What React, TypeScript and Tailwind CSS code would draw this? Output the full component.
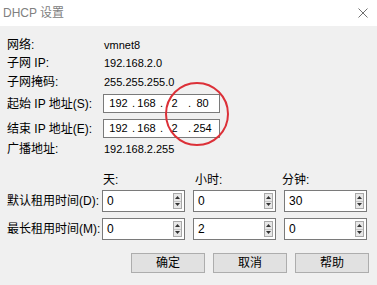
import React from "react";

const font = { fontFamily: '"Liberation Sans", "Noto Sans CJK SC", sans-serif' };

function IpBox({ parts }: { parts: string[] }) {
  return (
    <div className="w-[117px] h-[19px] border border-[#7a7a7a] bg-white flex items-center pl-[4px] text-[11px] leading-none text-black">
      {parts.map((p, i) => (
        <React.Fragment key={i}>
          <span className="w-[21px] text-center">{p}</span>
          {i < 3 && <span className="w-[7px] text-right pr-[1px]">.</span>}
        </React.Fragment>
      ))}
    </div>
  );
}

function Spinner() {
  return (
    <div className="w-[9px] h-[16px] flex flex-col border border-[#a9a9a9] bg-[#e8e8e8]">
      <div className="flex-1 flex items-center justify-center border-b border-[#c4c4c4]">
        <svg width="5" height="3" viewBox="0 0 5 3"><path d="M0 3 L2.5 0 L5 3 Z" fill="#333" /></svg>
      </div>
      <div className="flex-1 flex items-center justify-center">
        <svg width="5" height="3" viewBox="0 0 5 3"><path d="M0 0 L2.5 3 L5 0 Z" fill="#333" /></svg>
      </div>
    </div>
  );
}

function SpinBox({ value }: { value: string }) {
  return (
    <div className="w-[83px] h-[22px] border border-[#7a7a7a] bg-white flex items-center justify-between pl-[4px] pr-[2px] text-[12px] leading-none text-black">
      <span>{value}</span>
      <Spinner />
    </div>
  );
}

function InfoRow({ label, value }: { label: string; value: string }) {
  return (
    <div className="flex items-center h-[18px] text-[12px] leading-none">
      <span className="w-[97px] text-black">{label}</span>
      <span className="text-[11px] text-black">{value}</span>
    </div>
  );
}

export default function App() {
  return (
    <div className="w-[377px] h-[285px] bg-[#f0f0f0] relative overflow-hidden" style={font}>
      <div className="h-[26px] bg-white flex items-center justify-between pl-[3px] pr-[9px]">
        <span className="text-[12px] text-[#808080] leading-none">DHCP 设置</span>
        <svg width="10" height="10" viewBox="0 0 10 10">
          <path d="M0.5 0.5 L9.5 9.5 M9.5 0.5 L0.5 9.5" stroke="#707070" strokeWidth="1" />
        </svg>
      </div>

      <div className="pl-[7px] flex flex-col">
        <div className="mt-[10px]">
          <InfoRow label="网络:" value="vmnet8" />
        </div>
        <InfoRow label="子网 IP:" value="192.168.2.0" />
        <div className="mt-[1px]">
          <InfoRow label="子网掩码:" value="255.255.255.0" />
        </div>

        <div className="flex items-center mt-[3px] text-[12px] leading-none">
          <span className="w-[96px] text-black">起始 IP 地址(S):</span>
          <IpBox parts={["192", "168", "2", "80"]} />
        </div>
        <div className="flex items-center mt-[6px] text-[12px] leading-none">
          <span className="w-[96px] text-black">结束 IP 地址(E):</span>
          <IpBox parts={["192", "168", "2", "254"]} />
        </div>
        <div className="mt-[2px]">
          <InfoRow label="广播地址:" value="192.168.2.255" />
        </div>

        <div className="flex items-center h-[18px] mt-[13px] text-[12px] leading-none text-black">
          <span className="w-[95px]" />
          <span className="w-[83px] pl-[1px]">天:</span>
          <span className="w-[83px] ml-[8px] pl-[2px]">小时:</span>
          <span className="w-[83px] ml-[6px]">分钟:</span>
        </div>

        <div className="flex items-center mt-[1px] text-[12px] leading-none">
          <span className="w-[95px] text-black">默认租用时间(D):</span>
          <div className="flex gap-[8px]">
            <SpinBox value="0" />
            <SpinBox value="0" />
            <SpinBox value="30" />
          </div>
        </div>
        <div className="flex items-center mt-[6px] text-[12px] leading-none">
          <span className="w-[95px] text-black">最长租用时间(M):</span>
          <div className="flex gap-[8px]">
            <SpinBox value="0" />
            <SpinBox value="2" />
            <SpinBox value="0" />
          </div>
        </div>

        <div className="flex justify-end gap-[8px] pr-[8px] mt-[13px]">
          {["确定", "取消", "帮助"].map((t) => (
            <button
              key={t}
              className="w-[74px] h-[20px] bg-[#e1e1e1] border border-[#adadad] text-[12px] leading-none text-black flex items-center justify-center"
            >
              {t}
            </button>
          ))}
        </div>
      </div>

      <div className="absolute left-[165px] top-[82px] w-[64px] h-[64px] rounded-full border-[2px] border-[#dc3038]" />
    </div>
  );
}
